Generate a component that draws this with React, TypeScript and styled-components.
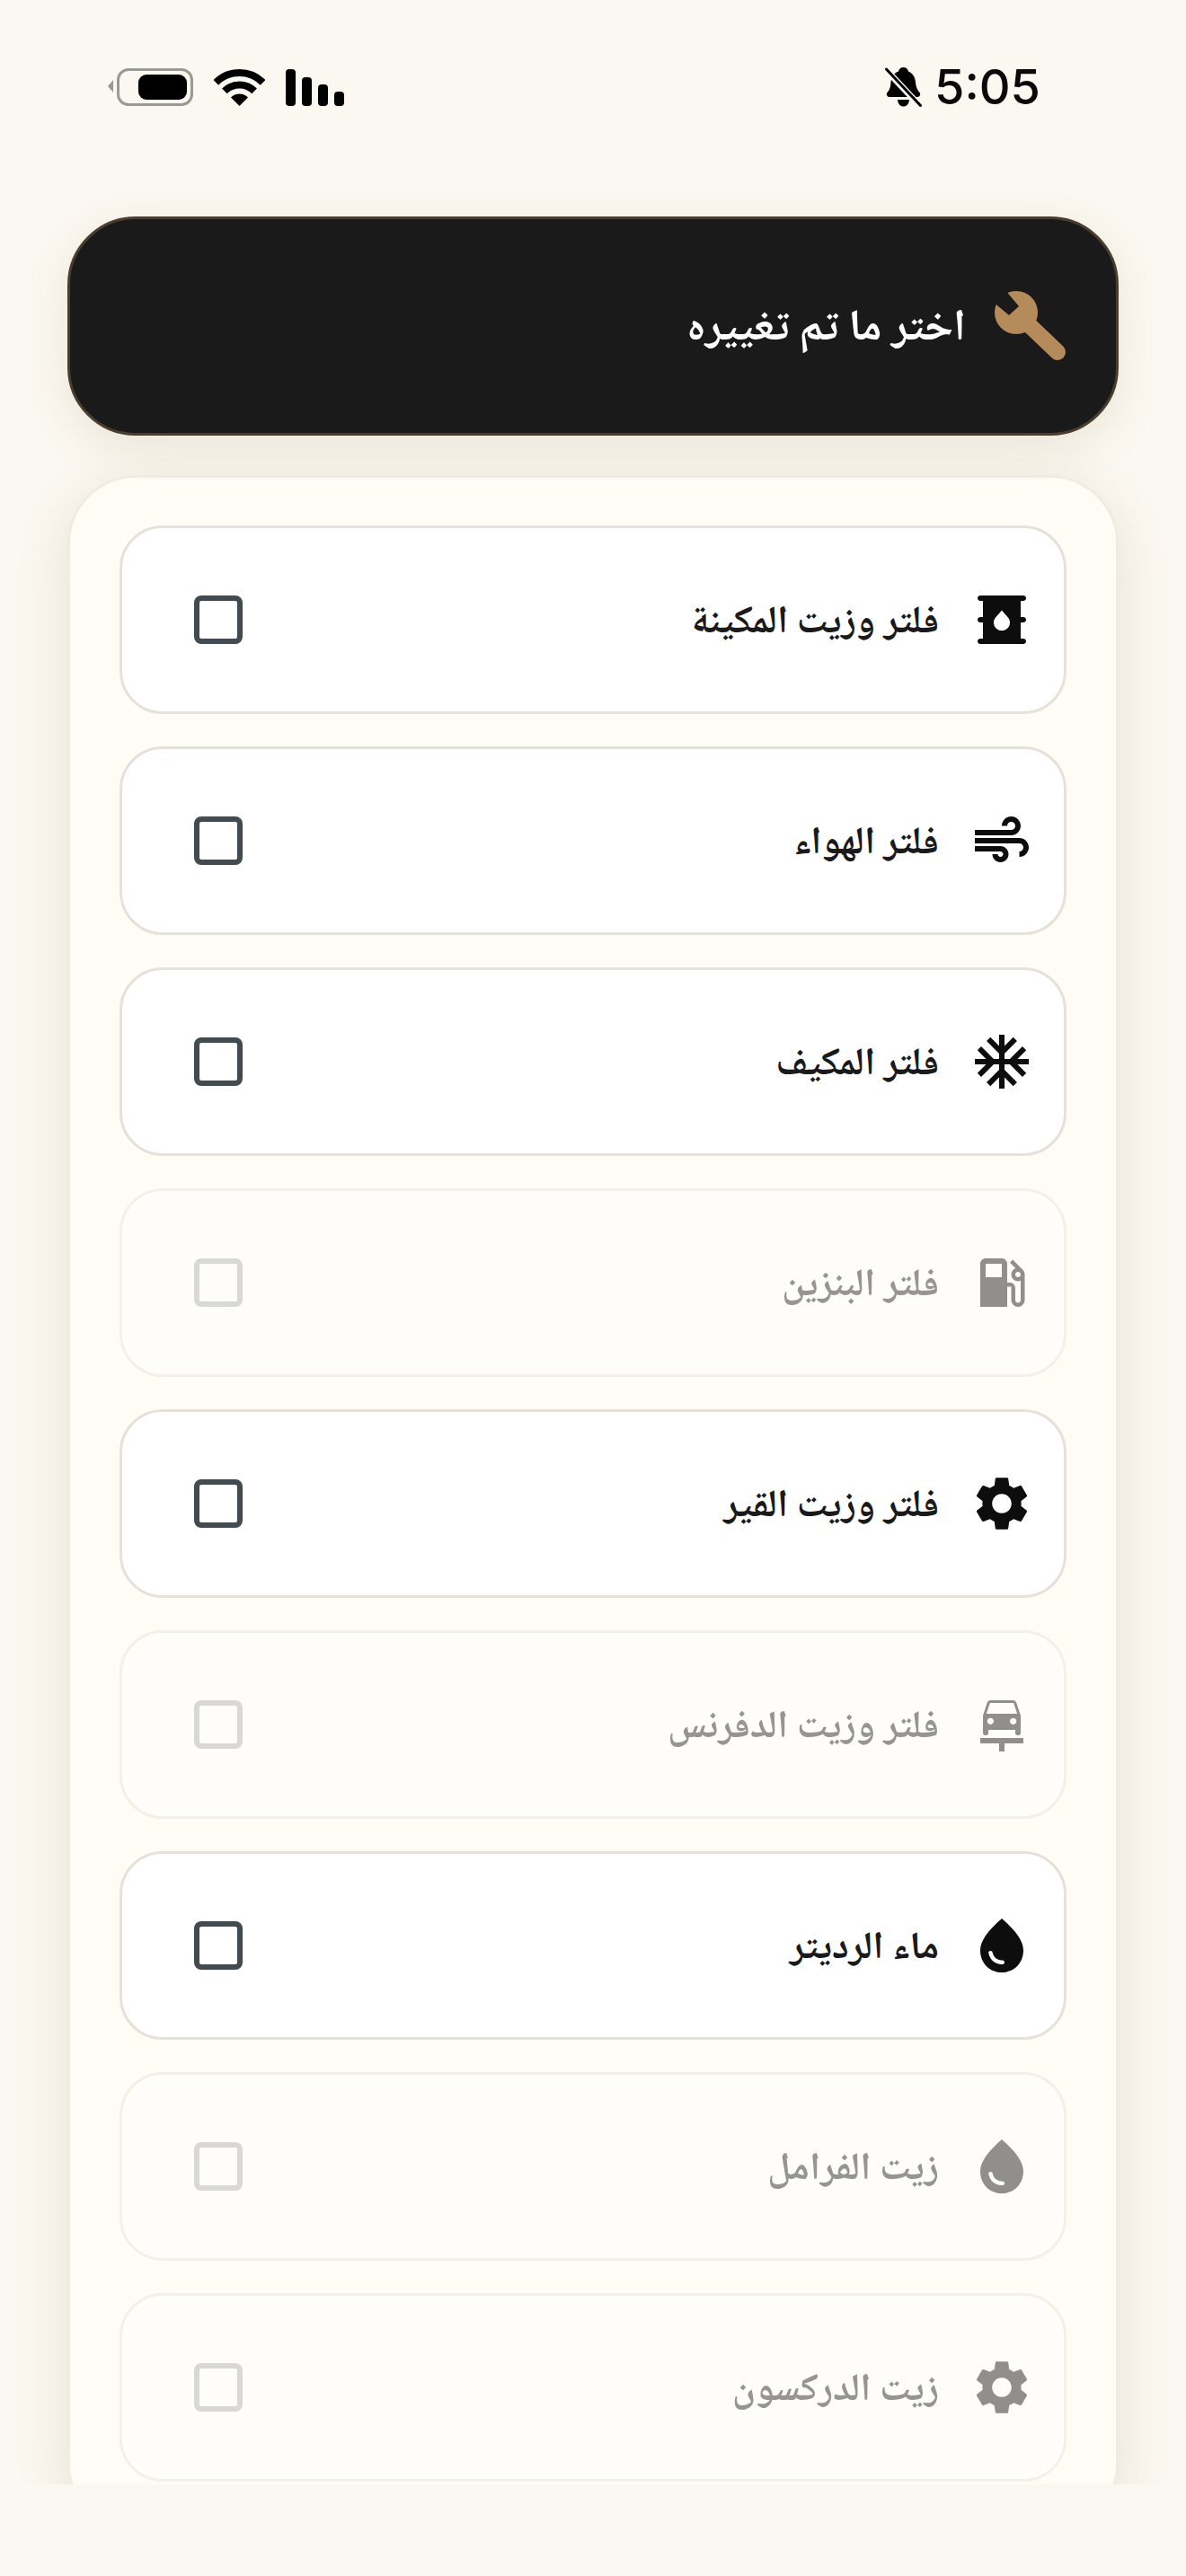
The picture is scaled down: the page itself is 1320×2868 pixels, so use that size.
import React from "react";
import styled, { createGlobalStyle } from "styled-components";
import { MdOilBarrel, MdAir, MdAcUnit, MdLocalGasStation, MdSettings, MdCarRepair, MdWaterDrop } from "react-icons/md";

const Global = createGlobalStyle`
  html, body { margin: 0; padding: 0; background: #fbf8f1; }
  body { font-family: "Noto Naskh Arabic", "DejaVu Sans", serif; }
  * { box-sizing: border-box; }
`;

const Page = styled.div`
  width: 1320px;
  height: 2868px;
  background: #fbf8f1;
`;

const Screen = styled.main`
  height: 2766px;
  overflow: hidden;
  padding: 0 75px;
`;

const StatusBar = styled.div`
  height: 194px;
  margin: 0 -75px 47px;
  padding: 0 162px 0 121px;
  display: flex;
  align-items: center;
  justify-content: space-between;
`;

const TimeGroup = styled.div`
  display: flex;
  align-items: center;
  gap: 14px;
`;

const Time = styled.span`
  font-family: Inter, "Liberation Sans", sans-serif;
  font-size: 54px;
  font-weight: 550;
  line-height: 60px;
  color: #0a0a0a;
  direction: ltr;
`;

const Indicators = styled.div`
  display: flex;
  align-items: center;
  gap: 23px;
  direction: ltr;
`;

const Battery = styled.div`
  position: relative;
  width: 85px;
  height: 42px;
  margin-left: 9px;
  padding: 4px 4px 4px 21px;
  border: 3px solid #9a9a94;
  border-radius: 13px;

  &::before {
    content: "";
    position: absolute;
    left: -13px;
    top: 10px;
    border-style: solid;
    border-width: 7px 6px 7px 0;
    border-color: transparent #9a9a94 transparent transparent;
  }
`;

const BatteryFill = styled.div`
  width: 100%;
  height: 100%;
  background: #000;
  border-radius: 9px;
`;

const Signal = styled.div`
  display: flex;
  align-items: flex-end;
  gap: 7px;
  height: 42px;
`;

const SignalBar = styled.div<{ $h: number }>`
  width: 11px;
  height: ${(p) => p.$h}px;
  background: #000;
  border-radius: 4px;
`;

const HeaderCard = styled.header`
  height: 244px;
  margin-bottom: 44px;
  padding: 0 55px;
  display: flex;
  align-items: center;
  gap: 32px;
  background: #1a1a1a;
  border: 3px solid #4a3d2e;
  border-radius: 76px;
  box-shadow: 0 14px 50px rgba(120, 95, 50, 0.12);
`;

const HeaderTitle = styled.h1`
  margin: 0;
  padding-top: 8px;
  font-size: 49px;
  font-weight: 700;
  color: #fff;
  font-family: "Noto Naskh Arabic", serif;
`;

const Panel = styled.section`
  display: flex;
  flex-direction: column;
  gap: 36px;
  padding: 53px 55px;
  background: #fffcf5;
  border: 3px solid #f2ebdf;
  border-radius: 76px;
  box-shadow: 0 14px 60px rgba(120, 95, 50, 0.14);
`;

const Row = styled.div<{ $off?: boolean }>`
  height: 210px;
  flex: none;
  padding: 0 33px 0 80px;
  display: flex;
  align-items: center;
  gap: 34px;
  background: #fff;
  border: 3px solid #e5e2db;
  border-radius: 48px;
  opacity: ${(p) => (p.$off ? 0.45 : 1)};
`;

const IconBox = styled.span`
  width: 72px;
  height: 72px;
  flex: none;
  color: #0d0d0d;
  display: flex;
  align-items: center;
  justify-content: center;
  direction: ltr;

  svg { width: 72px; height: 72px; display: block; }
`;

const Label = styled.span`
  flex: 1;
  padding-top: 8px;
  font-size: 43px;
  font-weight: 700;
  color: #1a1a1a;
  font-family: "Noto Naskh Arabic", serif;
`;

const Check = styled.span<{ $off?: boolean }>`
  width: 54px;
  height: 54px;
  flex: none;
  border: 6px solid #414b50;
  border-radius: 8px;
  opacity: ${(p) => (p.$off ? 0.45 : 1)};
`;

const BellOff = () => (
  <svg width="41" height="45" viewBox="0 0 41 45" fill="none">
    <path d="M20.5 0c3 0 5 2 5.5 4.5 5 2 7.5 6.500 8 12 .4 5 1.500 8 4.500 11.500 1.500 2 .5 5-2.500 5H5c-3 0-4-3-2.500-5 3-3.500 3.600-6.500 4-11.500.5-5.500 3-10 8.500-12C15.500 2 17.500 0 20.500 0Z" fill="#000" />
    <path d="M14 36h13c-.5 5-3 7.500-6.500 7.500S14.500 41 14 36Z" fill="#000" />
    <path d="M1 2.500 39 43" stroke="#fbf8f1" strokeWidth="7" />
    <path d="M1.500 2 39.500 42.500" stroke="#000" strokeWidth="3" strokeLinecap="round" />
  </svg>
);

const arc = (r: number) => {
  const d = r * Math.SQRT1_2;
  return `M${28.5 - d} ${42 - d}A${r} ${r} 0 0 1 ${28.5 + d} ${42 - d}`;
};

const Wifi = () => (
  <svg width="57" height="42" viewBox="0 0 57 42" fill="none">
    <path d={arc(37)} stroke="#000" strokeWidth="8" />
    <path d={arc(23.500)} stroke="#000" strokeWidth="8" />
    <path d="M28.500 42 19 32.500a13.400 13.400 0 0 1 19 0Z" fill="#000" />
  </svg>
);

const Wrench = () => (
  <svg width="80" height="78" viewBox="0 0 80 78">
    <defs>
      <mask id="wrench-notch" maskUnits="userSpaceOnUse" x="0" y="0" width="80" height="78">
        <rect width="80" height="78" fill="#fff" />
        <polygon points="6,-8 27,17 16,27 -10,5" fill="#000" />
      </mask>
    </defs>
    <g fill="#b68b5c" mask="url(#wrench-notch)">
      <circle cx="24" cy="24" r="24" />
      <path d="M24 24 70 68" stroke="#b68b5c" strokeWidth="18" strokeLinecap="round" />
    </g>
  </svg>
);

const items = [
  { label: "فلتر وزيت المكينة", Icon: MdOilBarrel },
  { label: "فلتر الهواء", Icon: MdAir },
  { label: "فلتر المكيف", Icon: MdAcUnit },
  { label: "فلتر البنزين", Icon: MdLocalGasStation, off: true },
  { label: "فلتر وزيت القير", Icon: MdSettings },
  { label: "فلتر وزيت الدفرنس", Icon: MdCarRepair, off: true },
  { label: "ماء الرديتر", Icon: MdWaterDrop },
  { label: "زيت الفرامل", Icon: MdWaterDrop, off: true },
  { label: "زيت الدركسون", Icon: MdSettings, off: true },
];

export default function App() {
  return (
    <Page dir="rtl" lang="ar">
      <Global />
      <Screen>
        <StatusBar>
          <TimeGroup>
            <Time>5:05</Time>
            <BellOff />
          </TimeGroup>
          <Indicators>
            <Battery>
              <BatteryFill />
            </Battery>
            <Wifi />
            <Signal>
              <SignalBar $h={41} />
              <SignalBar $h={32} />
              <SignalBar $h={24} />
              <SignalBar $h={16} />
            </Signal>
          </Indicators>
        </StatusBar>
        <HeaderCard>
          <Wrench />
          <HeaderTitle>اختر ما تم تغييره</HeaderTitle>
        </HeaderCard>
        <Panel>
          {items.map(({ label, Icon, off }) => (
            <Row key={label} $off={off}>
              <IconBox>
                <Icon />
              </IconBox>
              <Label>{label}</Label>
              <Check $off={off} />
            </Row>
          ))}
        </Panel>
      </Screen>
    </Page>
  );
}
